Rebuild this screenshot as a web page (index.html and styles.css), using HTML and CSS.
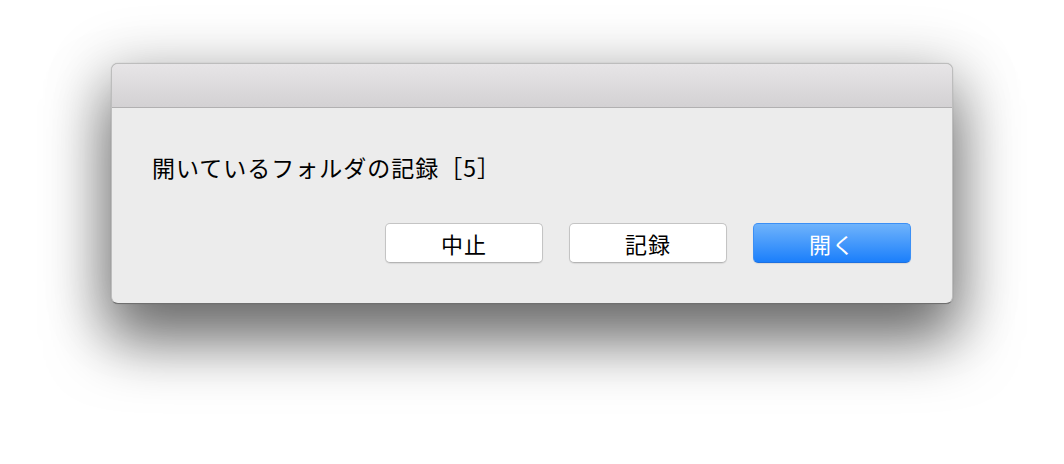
FILE: index.html
```html
<!DOCTYPE html>
<html lang="ja">
<head>
<meta charset="utf-8">
<link rel="stylesheet" href="styles.css">
</head>
<body>
<div class="window">
  <div class="titlebar"></div>
  <div class="content">
    <p class="message">開いているフォルダの記録［5］</p>
    <div class="buttons">
      <button class="btn">中止</button>
      <button class="btn">記録</button>
      <button class="btn primary">開く</button>
    </div>
  </div>
</div>
</body>
</html>
```

FILE: styles.css
```css
html, body {
  margin: 0;
  padding: 0;
  background: #ffffff;
}
body {
  width: 1064px;
  height: 464px;
  overflow: hidden;
  padding: 63px 0 0 111px;
  box-sizing: border-box;
  font-family: "Noto Sans CJK JP", "Noto Sans", sans-serif;
}
.window {
  width: 842px;
  height: 241px;
  box-sizing: border-box;
  border-radius: 7px;
  background: #ececec;
  border: 1px solid #bdbdbd;
  border-bottom-color: #6f6f6f;
  box-shadow: 0 36px 60px 2px rgba(0, 0, 0, 0.5), 0 10px 60px 10px rgba(0, 0, 0, 0.18), 0 0 1px rgba(0,0,0,0.3);
  overflow: hidden;
  display: flex;
  flex-direction: column;
}
.titlebar {
  height: 43px;
  flex: none;
  background: linear-gradient(#e7e5e7, #d3d1d3);
  border-bottom: 1px solid #b1b0b1;
}
.content {
  flex: 1;
  display: flex;
  flex-direction: column;
  padding: 44px 41px 0 40px;
}
.message {
  margin: 0;
  font-size: 23px;
  line-height: 30px;
  color: #000;
  letter-spacing: 1px;
}
.buttons {
  margin-top: 41px;
  display: flex;
  justify-content: flex-end;
  gap: 26px;
}
.btn {
  width: 158px;
  height: 40px;
  box-sizing: border-box;
  border: 1px solid #c4c4c4;
  border-bottom-color: #b4b4b4;
  border-radius: 5px;
  background: #ffffff;
  box-shadow: 0 1px 1px rgba(0,0,0,0.08);
  font-family: "Noto Sans CJK JP", sans-serif;
  font-size: 22px;
  color: #000;
  padding: 0;
  line-height: 38px;
  letter-spacing: 1px;
}
.btn.primary {
  background: linear-gradient(#6fb3fb, #1b7ffb);
  border-color: #3b8ff5;
  border-bottom-color: #1d70e0;
  color: #ffffff;
}
```
